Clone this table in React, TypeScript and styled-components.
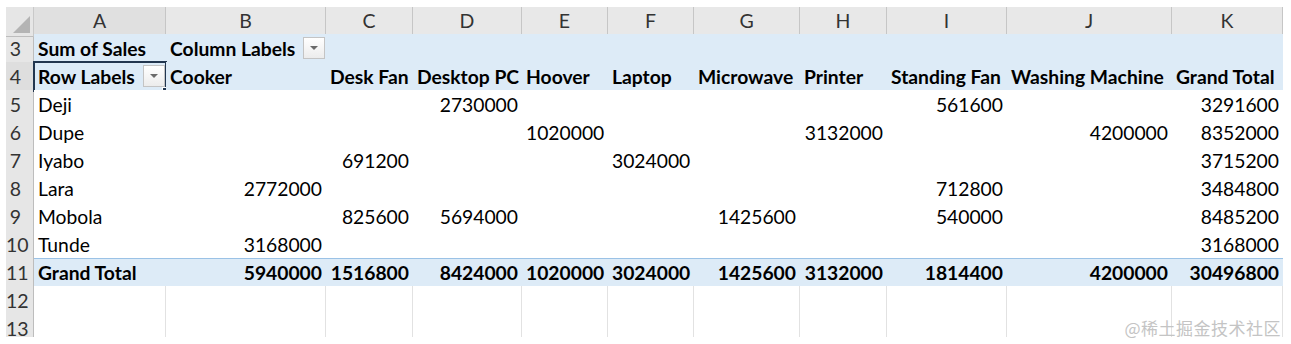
import React from "react";
import styled, { createGlobalStyle } from "styled-components";

const GlobalStyle = createGlobalStyle`
  html, body { margin: 0; padding: 0; background: #ffffff; }
  body { font-family: "Lato", "Liberation Sans", sans-serif; }
`;

const COLS = [28, 132, 160, 87, 109, 86, 86, 106, 87, 120, 165, 111];
const TEMPLATE = COLS.map((c) => `${c}px`).join(" ");
const LETTERS = ["A", "B", "C", "D", "E", "F", "G", "H", "I", "J", "K"];

const Page = styled.div`
  position: relative;
  width: 1291px;
  height: 344px;
  padding: 7px 0 0 6px;
  box-sizing: border-box;
  overflow: hidden;
`;

const Sheet = styled.div`
  display: flex;
  flex-direction: column;
  width: ${COLS.reduce((a, b) => a + b, 0)}px;
  height: 330px;
  overflow: hidden;
`;

const Row = styled.div<{ $h: number }>`
  display: grid;
  grid-template-columns: ${TEMPLATE};
  height: ${(p) => p.$h}px;
  flex: none;
`;

const Corner = styled.div`
  position: relative;
  background: #e6e6e6;
  border-right: 1px solid #c9c9c9;
  border-bottom: 1px solid #bdbdbd;
  box-sizing: border-box;
  &::after {
    content: "";
    position: absolute;
    right: 3px;
    bottom: 3px;
    width: 0;
    height: 0;
    border-left: 17px solid transparent;
    border-bottom: 17px solid #b4b4b4;
  }
`;

const ColHead = styled.div<{ $active?: boolean }>`
  background: ${(p) => (p.$active ? "#e0e0e0" : "#e8e8e8")};
  border-right: 1px solid #c6c6c6;
  border-bottom: ${(p) => (p.$active ? "2px solid #2b3f57" : "1px solid #bdbdbd")};
  box-sizing: border-box;
  color: #333;
  font-size: 19.5px;
  line-height: 28px;
  text-align: center;
`;

const RowHead = styled.div<{ $active?: boolean }>`
  background: ${(p) => (p.$active ? "#dedede" : "#e6e6e6")};
  border-right: 1px solid #bdbdbd;
  border-bottom: 1px dotted #c3c3c3;
  box-sizing: border-box;
  color: #333;
  font-size: 19.5px;
  line-height: 29px;
  padding-right: 8px;
  text-align: center;
`;

type Tone = "blue" | "white" | "total" | "empty";

const Cell = styled.div<{ $tone: Tone; $bold?: boolean; $right?: boolean; $line?: boolean }>`
  position: relative;
  box-sizing: border-box;
  background: ${(p) => (p.$tone === "blue" || p.$tone === "total" ? "#ddebf7" : "#ffffff")};
  border-top: ${(p) => (p.$tone === "total" ? "1px solid #9bc2e6" : "none")};
  border-bottom: ${(p) =>
    p.$line ? "1px solid #9bc2e6" : p.$tone === "empty" ? "1px dotted #d4d4d4" : "none"};
  border-right: ${(p) => (p.$tone === "empty" ? "1px solid #e2e2e2" : "none")};
  font-size: 19.3px;
  font-weight: ${(p) => (p.$bold ? 700 : 400)};
  color: #000;
  line-height: 28px;
  padding: ${(p) => (p.$tone === "total" ? "0 4px" : "1px 4px 0")};
  text-align: ${(p) => (p.$right ? "right" : "left")};
  white-space: nowrap;
  overflow: visible;
`;

const Selected = styled.div`
  position: absolute;
  left: -1px;
  top: -1px;
  right: -1px;
  bottom: -1px;
  border: 2px solid #22364f;
  pointer-events: none;
  &::after {
    content: "";
    position: absolute;
    right: -5px;
    bottom: -5px;
    width: 6px;
    height: 6px;
    background: #22364f;
    border: 1px solid #ffffff;
  }
`;

const Dropdown = styled.div`
  position: absolute;
  right: 1px;
  top: 3px;
  width: 22px;
  height: 22px;
  box-sizing: border-box;
  border: 1px solid #c4c4c4;
  background: linear-gradient(#ffffff, #ececec);
  display: flex;
  align-items: center;
  justify-content: center;
  &::before {
    content: "";
    width: 0;
    height: 0;
    border-left: 4px solid transparent;
    border-right: 4px solid transparent;
    border-top: 4px solid #6a6a6a;
  }
`;

const Watermark = styled.div`
  position: absolute;
  right: 10px;
  bottom: 4px;
  font-family: "Noto Sans CJK SC", sans-serif;
  font-size: 17px;
  color: #c4c4c4;
  letter-spacing: 0.5px;
`;

const products = [
  "Cooker",
  "Desk Fan",
  "Desktop PC",
  "Hoover",
  "Laptop",
  "Microwave",
  "Printer",
  "Standing Fan",
  "Washing Machine",
  "Grand Total",
];

const data: [string, (string | null)[]][] = [
  ["Deji", [null, null, "2730000", null, null, null, null, "561600", null, "3291600"]],
  ["Dupe", [null, null, null, "1020000", null, null, "3132000", null, "4200000", "8352000"]],
  ["Iyabo", [null, "691200", null, null, "3024000", null, null, null, null, "3715200"]],
  ["Lara", ["2772000", null, null, null, null, null, null, "712800", null, "3484800"]],
  ["Mobola", [null, "825600", "5694000", null, null, "1425600", null, "540000", null, "8485200"]],
  ["Tunde", ["3168000", null, null, null, null, null, null, null, null, "3168000"]],
];

const totals = [
  "5940000",
  "1516800",
  "8424000",
  "1020000",
  "3024000",
  "1425600",
  "3132000",
  "1814400",
  "4200000",
  "30496800",
];

export default function App() {
  return (
    <Page>
      <GlobalStyle />
      <Sheet>
        <Row $h={27}>
          <Corner />
          {LETTERS.map((l) => (
            <ColHead key={l} $active={l === "A"}>
              {l}
            </ColHead>
          ))}
        </Row>

        <Row $h={28}>
          <RowHead>3</RowHead>
          <Cell $tone="blue" $bold>
            Sum of Sales
          </Cell>
          <Cell $tone="blue" $bold>
            Column Labels
            <Dropdown />
          </Cell>
          {LETTERS.slice(2).map((l) => (
            <Cell key={l} $tone="blue" />
          ))}
        </Row>

        <Row $h={28}>
          <RowHead $active>4</RowHead>
          <Cell $tone="blue" $bold $line>
            Row Labels
            <Dropdown />
            <Selected />
          </Cell>
          {products.map((p) => (
            <Cell key={p} $tone="blue" $bold $line>
              {p}
            </Cell>
          ))}
        </Row>

        {data.map(([name, vals], i) => (
          <Row key={name} $h={28}>
            <RowHead>{i + 5}</RowHead>
            <Cell $tone="white">{name}</Cell>
            {vals.map((v, j) => (
              <Cell key={j} $tone="white" $right>
                {v}
              </Cell>
            ))}
          </Row>
        ))}

        <Row $h={28}>
          <RowHead>11</RowHead>
          <Cell $tone="total" $bold>
            Grand Total
          </Cell>
          {totals.map((t, j) => (
            <Cell key={j} $tone="total" $bold $right>
              {t}
            </Cell>
          ))}
        </Row>

        {[12, 13].map((n) => (
          <Row key={n} $h={28}>
            <RowHead>{n}</RowHead>
            {LETTERS.map((l) => (
              <Cell key={l} $tone="empty" />
            ))}
          </Row>
        ))}
      </Sheet>
      <Watermark>@稀土掘金技术社区</Watermark>
    </Page>
  );
}
